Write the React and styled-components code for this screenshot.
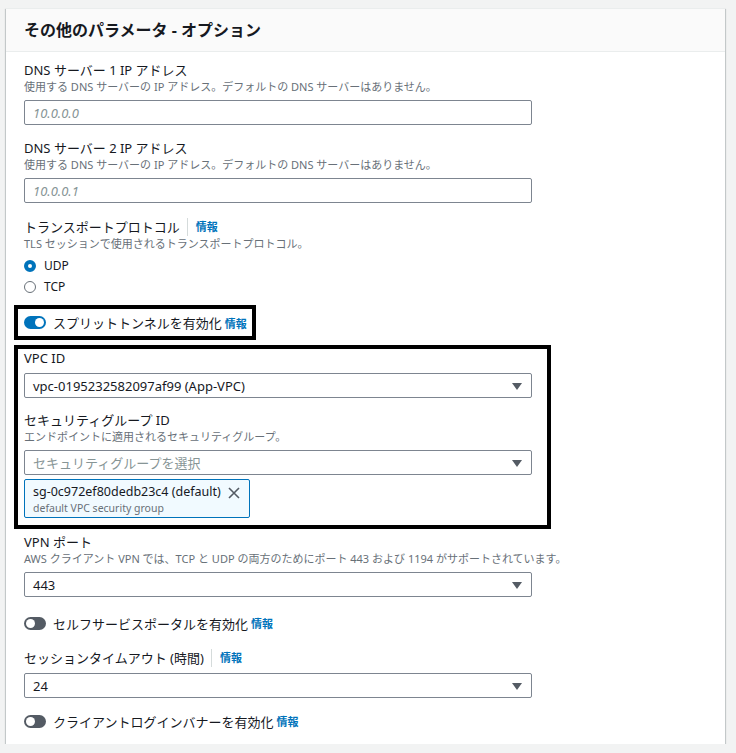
import React from 'react'
import styled, { createGlobalStyle } from 'styled-components'

const GlobalStyle = createGlobalStyle`
    body {
        margin: 0;
        background: #f2f3f3;
        font-family: "Noto Sans", "Noto Sans CJK JP", sans-serif;
        color: #16191f;
    }
`;

const Card = styled.div`
    width: 719px;
    height: 736px;
    margin: 8px 0 0 6px;
    box-sizing: border-box;
    background: #fff;
    border-top: 1px solid #eaeded;
    box-shadow: 0 1px 1px 0 rgba(0,28,36,.3), 1px 1px 1px 0 rgba(0,28,36,.15), -1px 1px 1px 0 rgba(0,28,36,.15);
`;

const Header = styled.div`
    height: 42px;
    display: flex;
    align-items: center;
    padding: 0 18px;
    background: #fafafa;
    border-bottom: 1px solid #eaeded;
`;

const Title = styled.h2`
    margin: 0;
    font-size: 16px;
    font-weight: 700;
    line-height: 22px;
`;

const Body = styled.div`
    padding: 9px 17px 0 18px;
`;

const Field = styled.div`
    margin-top: ${({ gap }) => gap || 0}px;
`;

const Label = styled.div`
    display: flex;
    align-items: center;
    font-size: 13px;
    line-height: 18px;
    height: 18px;
    white-space: nowrap;
`;

const Info = styled.a`
    color: #0073bb;
    font-size: 11px;
    font-weight: 700;
    text-decoration: none;
    white-space: nowrap;
    ${({ sep }) => sep && `
        margin-left: 7px;
        padding-left: 8px;
        border-left: 1px solid #d5dbdb;
    `}
    ${({ sep }) => !sep && `margin-left: 3px;`}
`;

const Desc = styled.div`
    font-size: 11px;
    line-height: 16px;
    color: #687078;
`;

const Input = styled.div`
    position: relative;
    width: 508px;
    height: 25px;
    margin-top: ${({ mt }) => mt ?? 5}px;
    box-sizing: border-box;
    border: 1px solid #7d8590;
    border-radius: 2px;
    display: flex;
    align-items: center;
    padding: 0 30px 0 8px;
    font-size: 13px;
    color: ${({ placeholder }) => (placeholder ? '#879596' : '#16191f')};
    font-style: ${({ italic }) => (italic ? 'italic' : 'normal')};
`;

const Caret = styled.span`
    position: absolute;
    right: 9px;
    top: 9px;
    width: 0;
    height: 0;
    border-left: 5px solid transparent;
    border-right: 5px solid transparent;
    border-top: 7px solid #545b64;
`;

const RadioGroup = styled.div`
    margin-top: 3px;
`;

const RadioRow = styled.label`
    display: flex;
    align-items: center;
    height: 21px;
    font-size: 12px;
    gap: 8px;
`;

const RadioDot = styled.span`
    width: 12px;
    height: 12px;
    box-sizing: border-box;
    border-radius: 50%;
    border: ${({ checked }) => (checked ? '4px solid #0073bb' : '1px solid #687078')};
    background: #fff;
`;

const Highlight = styled.div`
    margin-left: -10px;
    margin-top: ${({ gap }) => gap || 0}px;
    width: ${({ w }) => (w ? `${w}px` : 'fit-content')};
    box-sizing: border-box;
    border: 4px solid #000;
    padding: ${({ pad }) => pad};
`;

const ToggleRow = styled.div`
    display: flex;
    align-items: center;
    height: ${({ h }) => h || 20}px;
    margin-top: ${({ gap }) => gap || 0}px;
    font-size: 13px;
    white-space: nowrap;
`;

const Toggle = styled.span`
    position: relative;
    width: 22px;
    height: 13px;
    border-radius: 7px;
    background: ${({ on }) => (on ? '#0073bb' : '#545b64')};
    margin-right: 7px;
    flex: none;
    &:after {
        content: "";
        position: absolute;
        top: 2px;
        left: ${({ on }) => (on ? '11px' : '2px')};
        width: 9px;
        height: 9px;
        border-radius: 50%;
        background: #fff;
    }
`;

const Token = styled.div`
    position: relative;
    width: 226px;
    height: 39px;
    margin-top: 4px;
    box-sizing: border-box;
    border: 1px solid #0073bb;
    border-radius: 2px;
    background: #f1faff;
    padding: 3px 0 0 8px;
`;

const TokenTitle = styled.div`
    font-size: 12.5px;
    line-height: 18px;
`;

const TokenSub = styled.div`
    font-size: 10.5px;
    line-height: 14px;
    color: #687078;
`;

const Dismiss = styled.svg`
    position: absolute;
    right: 8px;
    top: 6px;
`;

const Select = ({ children, placeholder, mt }) => (
    <Input placeholder={placeholder} mt={mt}>
        {children}
        <Caret />
    </Input>
)

class App extends React.Component {
    render() {
        return (
            <>
                <GlobalStyle />
                <Card>
                    <Header>
                        <Title>その他のパラメータ - オプション</Title>
                    </Header>
                    <Body>
                        <Field>
                            <Label>DNS サーバー 1 IP アドレス</Label>
                            <Desc>使用する DNS サーバーの IP アドレス。デフォルトの DNS サーバーはありません。</Desc>
                            <Input placeholder italic>10.0.0.0</Input>
                        </Field>
                        <Field gap={14}>
                            <Label>DNS サーバー 2 IP アドレス</Label>
                            <Desc>使用する DNS サーバーの IP アドレス。デフォルトの DNS サーバーはありません。</Desc>
                            <Input placeholder italic>10.0.0.1</Input>
                        </Field>
                        <Field gap={15}>
                            <Label>トランスポートプロトコル<Info sep>情報</Info></Label>
                            <Desc>TLS セッションで使用されるトランスポートプロトコル。</Desc>
                            <RadioGroup>
                                <RadioRow><RadioDot checked />UDP</RadioRow>
                                <RadioRow><RadioDot />TCP</RadioRow>
                            </RadioGroup>
                        </Field>
                        <Highlight gap={8} pad="0 5px 0 6px">
                            <ToggleRow h={27}>
                                <Toggle on />スプリットトンネルを有効化<Info>情報</Info>
                            </ToggleRow>
                        </Highlight>
                        <Highlight gap={5} w={537} pad="0 15px 7px 6px">
                            <Label>VPC ID</Label>
                            <Select mt={6}>vpc-0195232582097af99 (App-VPC)</Select>
                            <Field gap={13}>
                                <Label>セキュリティグループ ID</Label>
                                <Desc>エンドポイントに適用されるセキュリティグループ。</Desc>
                                <Select placeholder mt={5}>セキュリティグループを選択</Select>
                                <Token>
                                    <TokenTitle>sg-0c972ef80dedb23c4 (default)</TokenTitle>
                                    <TokenSub>default VPC security group</TokenSub>
                                    <Dismiss width="14" height="14" viewBox="0 0 14 14">
                                        <path d="M2 2 L12 12 M12 2 L2 12" stroke="#545b64" strokeWidth="1.6" fill="none" />
                                    </Dismiss>
                                </Token>
                            </Field>
                        </Highlight>
                        <Field gap={4}>
                            <Label>VPN ポート</Label>
                            <Desc>AWS クライアント VPN では、TCP と UDP の両方のためにポート 443 および 1194 がサポートされています。</Desc>
                            <Select>443</Select>
                        </Field>
                        <ToggleRow gap={16}>
                            <Toggle />セルフサービスポータルを有効化<Info>情報</Info>
                        </ToggleRow>
                        <Field gap={16}>
                            <Label>セッションタイムアウト (時間)<Info sep>情報</Info></Label>
                            <Select mt={6}>24</Select>
                        </Field>
                        <ToggleRow gap={13}>
                            <Toggle />クライアントログインバナーを有効化<Info>情報</Info>
                        </ToggleRow>
                    </Body>
                </Card>
            </>
        )
    }
}

export default App
